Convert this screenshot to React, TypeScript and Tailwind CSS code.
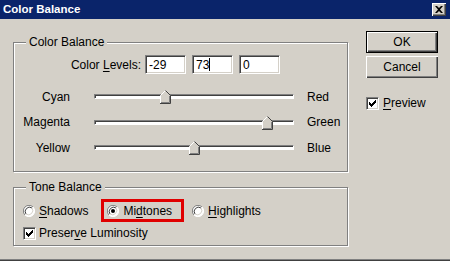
import type { ReactNode } from 'react';

const font = { fontFamily: '"Liberation Sans", Arial, sans-serif' };

function Group({ label, className, children }: { label: string; className: string; children: ReactNode }) {
  return (
    <div className={`relative border border-[#808080] shadow-[inset_1px_1px_0_#fff,1px_1px_0_#fff] ${className}`}>
      <span className="absolute top-[-8px] left-[12px] bg-[#d4d0c8] px-[3px] leading-[14px]">{label}</span>
      {children}
    </div>
  );
}

function Field({ value, caret }: { value: string; caret?: boolean }) {
  return (
    <div className="w-[41px] h-[19px] bg-white border border-t-[#808080] border-l-[#808080] border-b-white border-r-white shadow-[inset_1px_1px_0_#404040,inset_-1px_-1px_0_#d4d0c8] flex items-center pl-[3px] leading-none">
      <span>{value}</span>
      {caret && <span className="w-px h-[13px] bg-black" />}
    </div>
  );
}

function Thumb() {
  return (
    <svg width="11" height="14" viewBox="0 0 11 14" className="block">
      <path d="M0.5 13.5V5.5L5.5 0.5L10.5 5.5V13.5Z" fill="#d4d0c8" />
      <path d="M0.5 13V5.5L5.5 0.5" fill="none" stroke="#fff" />
      <path d="M5.5 0.5L10.5 5.5V13.5H0" fill="none" stroke="#404040" />
      <path d="M9.5 6V12.5H1" fill="none" stroke="#808080" />
    </svg>
  );
}

function SliderRow({ left, right, value }: { left: string; right: string; value: number }) {
  const x = ((value + 100) / 200) * 200 - 6;
  return (
    <div className="flex items-center h-[25.5px]">
      <div className="w-[56px] text-right">{left}</div>
      <div className="relative ml-[24px] w-[200px] h-[5px] bg-white border border-t-[#808080] border-l-[#808080] border-b-white border-r-white shadow-[inset_1px_1px_0_#404040]">
        <div className="absolute top-[-5px]" style={{ left: x }}>
          <Thumb />
        </div>
      </div>
      <div className="ml-[13px]">{right}</div>
    </div>
  );
}

function Radio({ checked }: { checked?: boolean }) {
  return (
    <svg width="12" height="12" viewBox="0 0 12 12" className="block shrink-0">
      <circle cx="6" cy="6" r="5.5" fill="#fff" />
      <path d="M10 2A5.5 5.5 0 0 0 2 10" fill="none" stroke="#808080" />
      <path d="M2 10A5.5 5.5 0 0 0 10 2" fill="none" stroke="#fff" />
      <path d="M9 3A4.3 4.3 0 0 0 3 9" fill="none" stroke="#404040" />
      <path d="M3 9A4.3 4.3 0 0 0 9 3" fill="none" stroke="#d4d0c8" />
      {checked && <circle cx="6" cy="6" r="2" fill="#000" />}
    </svg>
  );
}

function Check() {
  return (
    <div className="w-[13px] h-[13px] shrink-0 bg-white border border-t-[#808080] border-l-[#808080] border-b-white border-r-white shadow-[inset_1px_1px_0_#404040,inset_-1px_-1px_0_#d4d0c8] flex items-center justify-center">
      <svg width="7" height="7" viewBox="0 0 7 7" className="block">
        <path d="M0 2H1V3H2V4H3V3H4V2H5V1H6V0H7V3H6V4H5V5H4V6H3V7H2V6H1V5H0Z" fill="#000" />
      </svg>
    </div>
  );
}

function Button({ label, primary }: { label: string; primary?: boolean }) {
  return (
    <div
      className={`w-[72px] h-[22px] flex items-center justify-center bg-[#d4d0c8] ${
        primary
          ? 'border border-black shadow-[inset_1px_1px_0_#fff,inset_-1px_-1px_0_#404040,inset_-2px_-2px_0_#808080]'
          : 'shadow-[inset_1px_1px_0_#fff,inset_-1px_-1px_0_#404040,inset_-2px_-2px_0_#808080]'
      }`}
    >
      {label}
    </div>
  );
}

export default function App() {
  return (
    <div
      className="w-[450px] h-[261px] bg-[#d4d0c8] text-[12px] text-black flex flex-col overflow-hidden shadow-[inset_0_-1px_0_#404040,inset_0_-2px_0_#808080]"
      style={font}
    >
      <div className="h-[19px] bg-[#0a246a] flex items-center justify-between pl-[3px] pr-[4px]">
        <span className="text-white font-bold text-[11.5px]">Color Balance</span>
        <div className="w-[14px] h-[13px] bg-[#d4d0c8] shadow-[inset_1px_1px_0_#fff,inset_-1px_-1px_0_#404040,inset_-2px_-2px_0_#808080] flex items-center justify-center">
          <svg width="8" height="7" viewBox="0 0 8 7" className="block">
            <path d="M0 0H2L4 2L6 0H8L5 3.5L8 7H6L4 5L2 7H0L3 3.5Z" fill="#000" />
          </svg>
        </div>
      </div>

      <div className="flex">
        <div className="ml-[13px] mt-[23px] flex flex-col">
          <Group label="Color Balance" className="w-[335px] h-[130px] pt-[12px]">
            <div className="flex items-center">
              <div className="w-[127px] text-right">
                Color <u className="underline-offset-2">L</u>evels:
              </div>
              <div className="ml-[4px] flex gap-[6px]">
                <Field value="-29" />
                <Field value="73" caret />
                <Field value="0" />
              </div>
            </div>
            <div className="mt-[10px] flex flex-col">
              <SliderRow left="Cyan" right="Red" value={-29} />
              <SliderRow left="Magenta" right="Green" value={73} />
              <SliderRow left="Yellow" right="Blue" value={0} />
            </div>
          </Group>

          <Group label="Tone Balance" className="w-[335px] h-[59px] mt-[15px] pt-[11px] pl-[9px]">
            <div className="flex items-center h-[23px]">
              <div className="flex items-center gap-[4px]">
                <Radio />
                <span>
                  <u className="underline-offset-2">S</u>hadows
                </span>
              </div>
              <div className="ml-[13px] h-[23px] border-[3px] border-[#e00000] flex items-center gap-[4px] pl-[3px] pr-[9px]">
                <Radio checked />
                <span>
                  Mi<u className="underline-offset-2">d</u>tones
                </span>
              </div>
              <div className="ml-[8px] flex items-center gap-[4px]">
                <Radio />
                <span>
                  <u className="underline-offset-2">H</u>ighlights
                </span>
              </div>
            </div>
            <div className="mt-[2px] flex items-center gap-[3px]">
              <Check />
              <span>
                Preser<u className="underline-offset-2">v</u>e Luminosity
              </span>
            </div>
          </Group>
        </div>

        <div className="ml-[18px] mt-[12px] flex flex-col">
          <Button label="OK" primary />
          <div className="mt-[3px]">
            <Button label="Cancel" />
          </div>
          <div className="mt-[16px] flex items-center gap-[4px]">
            <Check />
            <span>
              <u className="underline-offset-2">P</u>review
            </span>
          </div>
        </div>
      </div>
    </div>
  );
}
